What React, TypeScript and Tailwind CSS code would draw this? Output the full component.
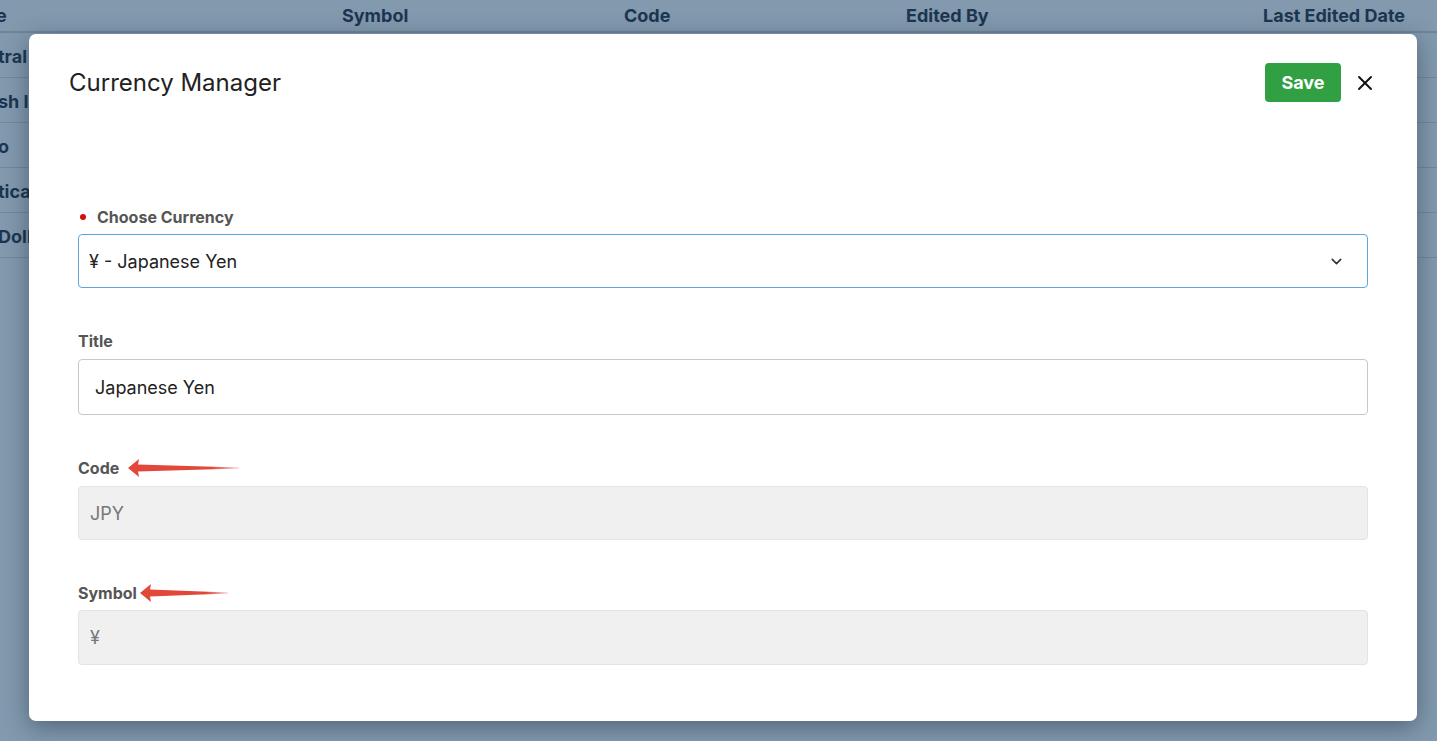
import React from "react";
import { ChevronDown, X } from "lucide-react";

function Arrow({ width }: { width: number }) {
  const h = 20;
  return (
    <svg width={width} height={h} viewBox={`0 0 ${width} ${h}`} className="block">
      <defs>
        <linearGradient id={`g${width}`} x1="0" x2="1" y1="0" y2="0">
          <stop offset="0" stopColor="#e2483a" />
          <stop offset="0.75" stopColor="#e2483a" />
          <stop offset="1" stopColor="#e2483a" stopOpacity="0.3" />
        </linearGradient>
      </defs>
      <polygon
        points={`0,10 11,1 10,6.5 ${width},9.5 ${width},10.5 10,13.5 11,19`}
        fill={`url(#g${width})`}
      />
    </svg>
  );
}

export default function App() {
  const font = { fontFamily: "Inter, 'Noto Sans', sans-serif" };
  const rows = ["tral", "sh I", "o", "tica", "Doll"];
  return (
    <div className="relative w-[1437px] h-[741px] overflow-hidden bg-[#8299ae]" style={font}>
      {/* background table */}
      <div className="flex flex-col text-[#1c3550] font-bold text-[18px]">
        <div className="h-[33px] flex items-center border-b-2 border-[#6e8599] relative">
          <span className="absolute left-[-4px]">e</span>
          <span className="absolute left-[342px]">Symbol</span>
          <span className="absolute left-[624px]">Code</span>
          <span className="absolute left-[906px]">Edited By</span>
          <span className="absolute left-[1263px]">Last Edited Date</span>
        </div>
        {rows.map((r) => (
          <div key={r} className="h-[45px] flex items-center border-b border-[#71889d] pt-[2px]">
            <span className="ml-[-2px]">{r}</span>
          </div>
        ))}
      </div>

      {/* modal */}
      <div className="absolute left-[29px] top-[34px] w-[1388px] h-[687px] bg-white rounded-[7px] shadow-[0_6px_24px_rgba(20,35,55,0.45)] flex flex-col">
        <div className="flex items-center justify-between pl-[40px] pr-[40px] pt-[29px]">
          <div className="text-[24px] text-[#222]">Currency Manager</div>
          <div className="flex items-center gap-[12px]">
            <button className="w-[76px] h-[39px] rounded-[4px] bg-[#30a043] text-white font-bold text-[18px]">
              Save
            </button>
            <X size={24} strokeWidth={1.9} className="text-[#111]" />
          </div>
        </div>

        <div className="flex flex-col px-[49px] mt-[106px]">
          <div className="flex items-center h-[18px] mb-[8px]">
            <span className="w-[6px] h-[6px] rounded-full bg-[#d10f0f] ml-[2px] mr-[11px]" />
            <span className="text-[16px] font-bold text-[#555]">Choose Currency</span>
          </div>
          <div className="h-[54px] border border-[#5ba8df] rounded-[4px] flex items-center justify-between pl-[10px] pr-[22px]">
            <span className="text-[18px] text-[#222]">¥ - Japanese Yen</span>
            <ChevronDown size={17} strokeWidth={2.2} className="text-[#333]" />
          </div>

          <div className="flex items-center h-[18px] mb-[9px] mt-[44px]">
            <span className="text-[16px] font-bold text-[#555]">Title</span>
          </div>
          <div className="h-[56px] border border-[#c8c8c8] rounded-[4px] flex items-center pl-[16px]">
            <span className="text-[18px] text-[#222]">Japanese Yen</span>
          </div>

          <div className="flex items-center h-[18px] mb-[9px] mt-[44px]">
            <span className="text-[16px] font-bold text-[#555]">Code</span>
            <span className="ml-[9px]">
              <Arrow width={111} />
            </span>
          </div>
          <div className="h-[54px] border border-[#e3e3e3] bg-[#f0f0f0] rounded-[4px] flex items-center pl-[11px]">
            <span className="text-[18px] text-[#777]">JPY</span>
          </div>

          <div className="flex items-center h-[18px] mb-[8px] mt-[44px]">
            <span className="text-[16px] font-bold text-[#555]">Symbol</span>
            <span className="ml-[3px]">
              <Arrow width={88} />
            </span>
          </div>
          <div className="h-[55px] border border-[#e3e3e3] bg-[#f0f0f0] rounded-[4px] flex items-center pl-[11px]">
            <span className="text-[18px] text-[#777]">¥</span>
          </div>
        </div>
      </div>
    </div>
  );
}
